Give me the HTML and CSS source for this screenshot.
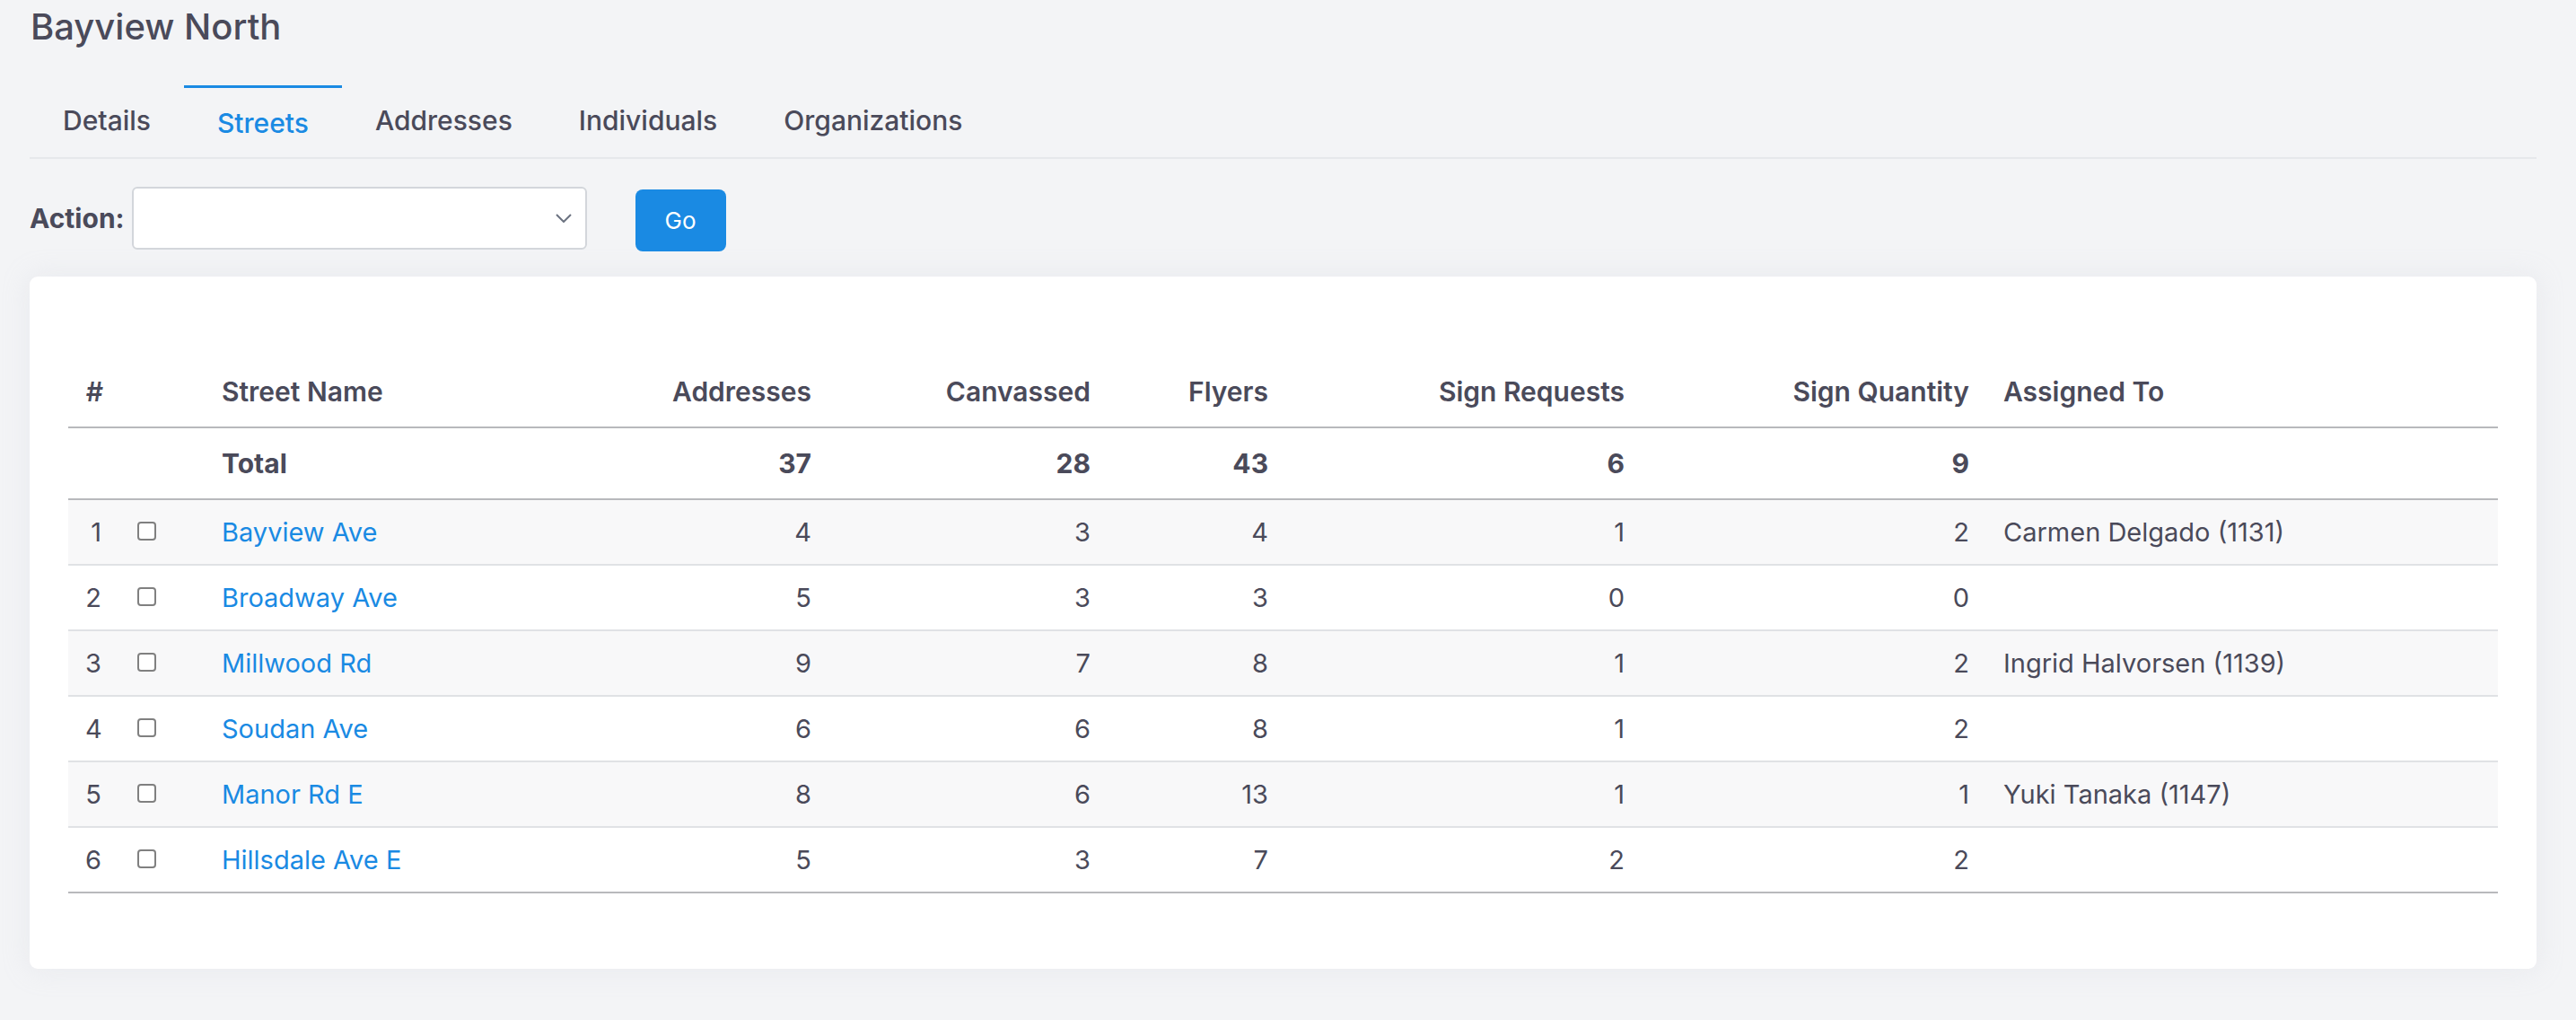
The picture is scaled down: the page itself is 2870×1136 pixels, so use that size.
FILE: index.html
```html
<!DOCTYPE html>
<html lang="en">
<head>
<meta charset="utf-8">
<title>Bayview North</title>
<link rel="stylesheet" href="styles.css">
</head>
<body>
<div class="page">
  <h1 class="title">Bayview North</h1>
  <nav class="tabs">
    <a class="tab">Details</a>
    <a class="tab active">Streets</a>
    <a class="tab">Addresses</a>
    <a class="tab">Individuals</a>
    <a class="tab">Organizations</a>
  </nav>
  <div class="actions">
    <label class="action-label">Action:</label>
    <div class="select">
      <svg class="chev" width="18" height="10" viewBox="0 0 18 10"><path d="M1 1 L9 9 L17 1" fill="none" stroke="#6b7280" stroke-width="2"/></svg>
    </div>
    <button class="go">Go</button>
  </div>
  <div class="card">
    <table class="grid">
      <colgroup>
        <col class="c-num"><col class="c-cb"><col class="c-name"><col class="c-addr"><col class="c-canv"><col class="c-fly"><col class="c-sreq"><col class="c-sqty"><col class="c-asg">
      </colgroup>
      <thead>
        <tr class="head">
          <th class="r">#</th><th></th><th class="l">Street Name</th><th class="r">Addresses</th><th class="r">Canvassed</th><th class="r">Flyers</th><th class="r">Sign Requests</th><th class="r">Sign Quantity</th><th class="l">Assigned To</th>
        </tr>
        <tr class="total">
          <th></th><th></th><th class="l">Total</th><th class="r">37</th><th class="r">28</th><th class="r">43</th><th class="r">6</th><th class="r">9</th><th></th>
        </tr>
      </thead>
      <tbody>
        <tr class="odd"><td class="r">1</td><td><span class="cb"></span></td><td><a class="link">Bayview Ave</a></td><td class="r">4</td><td class="r">3</td><td class="r">4</td><td class="r">1</td><td class="r">2</td><td>Carmen Delgado (1131)</td></tr>
        <tr><td class="r">2</td><td><span class="cb"></span></td><td><a class="link">Broadway Ave</a></td><td class="r">5</td><td class="r">3</td><td class="r">3</td><td class="r">0</td><td class="r">0</td><td></td></tr>
        <tr class="odd"><td class="r">3</td><td><span class="cb"></span></td><td><a class="link">Millwood Rd</a></td><td class="r">9</td><td class="r">7</td><td class="r">8</td><td class="r">1</td><td class="r">2</td><td>Ingrid Halvorsen (1139)</td></tr>
        <tr><td class="r">4</td><td><span class="cb"></span></td><td><a class="link">Soudan Ave</a></td><td class="r">6</td><td class="r">6</td><td class="r">8</td><td class="r">1</td><td class="r">2</td><td></td></tr>
        <tr class="odd"><td class="r">5</td><td><span class="cb"></span></td><td><a class="link">Manor Rd E</a></td><td class="r">8</td><td class="r">6</td><td class="r">13</td><td class="r">1</td><td class="r">1</td><td>Yuki Tanaka (1147)</td></tr>
        <tr class="last"><td class="r">6</td><td><span class="cb"></span></td><td><a class="link">Hillsdale Ave E</a></td><td class="r">5</td><td class="r">3</td><td class="r">7</td><td class="r">2</td><td class="r">2</td><td></td></tr>
      </tbody>
    </table>
  </div>
</div>
</body>
</html>
```
FILE: styles.css
```css
* { box-sizing: border-box; }
html, body { margin: 0; padding: 0; }
body {
  background: #f3f4f6;
  font-family: Inter, "Open Sans", sans-serif;
  color: #4a4a5a;
  width: 2870px;
  height: 1136px;
  overflow: hidden;
}
.page {
  padding: 6px 44px 0 33px;
}
.title {
  margin: 0 0 0 1px;
  font-size: 40px;
  line-height: 48px;
  font-weight: 500;
  color: #4a4a5a;
}
.tabs {
  display: flex;
  align-items: flex-start;
  margin-top: 41px;
  border-bottom: 2px solid #e6e8eb;
  height: 82px;
}
.tab {
  padding: 17px 37px 0 37px;
  font-size: 30px;
  line-height: 45px;
  font-weight: 500;
  color: #4a4a5a;
}
.tab.active {
  color: #1a8ae3;
  border-top: 3px solid #1a8ae3;
}
.actions {
  display: flex;
  align-items: center;
  margin-top: 30px;
  height: 72px;
}
.action-label {
  font-size: 30px;
  font-weight: 700;
  color: #4a4a5a;
  margin-right: 8px;
}
.select {
  width: 507px;
  height: 70px;
  background: #fff;
  border: 2px solid #d3d6db;
  border-radius: 6px;
  display: flex;
  align-items: center;
  justify-content: flex-end;
  padding-right: 15px;
}
.chev { display: block; }
.go {
  margin-left: 54px;
  margin-top: 4px;
  width: 101px;
  height: 69px;
  background: #1a8ae3;
  color: #fff;
  border: none;
  border-radius: 8px;
  font-family: Inter, sans-serif;
  font-size: 26px;
  font-weight: 400;
  padding: 0;
}
.card {
  margin-top: 29px;
  background: #fff;
  border-radius: 9px;
  padding: 88px 43px 84px 43px;
  box-shadow: 0 0 30px rgba(200, 205, 215, 0.25);
}
.grid {
  width: 100%;
  border-collapse: collapse;
  table-layout: fixed;
  font-size: 29px;
}
.c-num { width: 58px; }
.c-cb { width: 94px; }
.c-name { width: 372px; }
.c-addr { width: 323px; }
.c-canv { width: 311px; }
.c-fly { width: 198px; }
.c-sreq { width: 397px; }
.c-sqty { width: 384px; }
.c-asg { width: auto; }
.grid th, .grid td {
  padding: 0 19px;
  text-align: left;
  white-space: nowrap;
}
.grid .r { text-align: right; }
.grid th { font-weight: 600; color: #4a4a5a; font-size: 30px; }
.head th { height: 80px; border-bottom: 2px solid #b8b9bc; }
.total th { height: 80px; border-bottom: 2px solid #b8b9bc; font-weight: 700; }
.grid td {
  height: 73px;
  font-weight: 400;
  color: #4a4a5a;
  border-bottom: 2px solid #e0e2e5;
}
.grid tr.odd td { background: #f8f8f9; }
.grid tr.last td { border-bottom: 2px solid #b8b9bc; }
.grid td:first-child { padding-right: 21px; }
.cb {
  display: block;
  width: 21px;
  height: 21px;
  border: 2px solid #808080;
  border-radius: 4px;
  background: #fff;
  margin-top: -3px;
}
.link { color: #1a8ae3; text-decoration: none; }
```
